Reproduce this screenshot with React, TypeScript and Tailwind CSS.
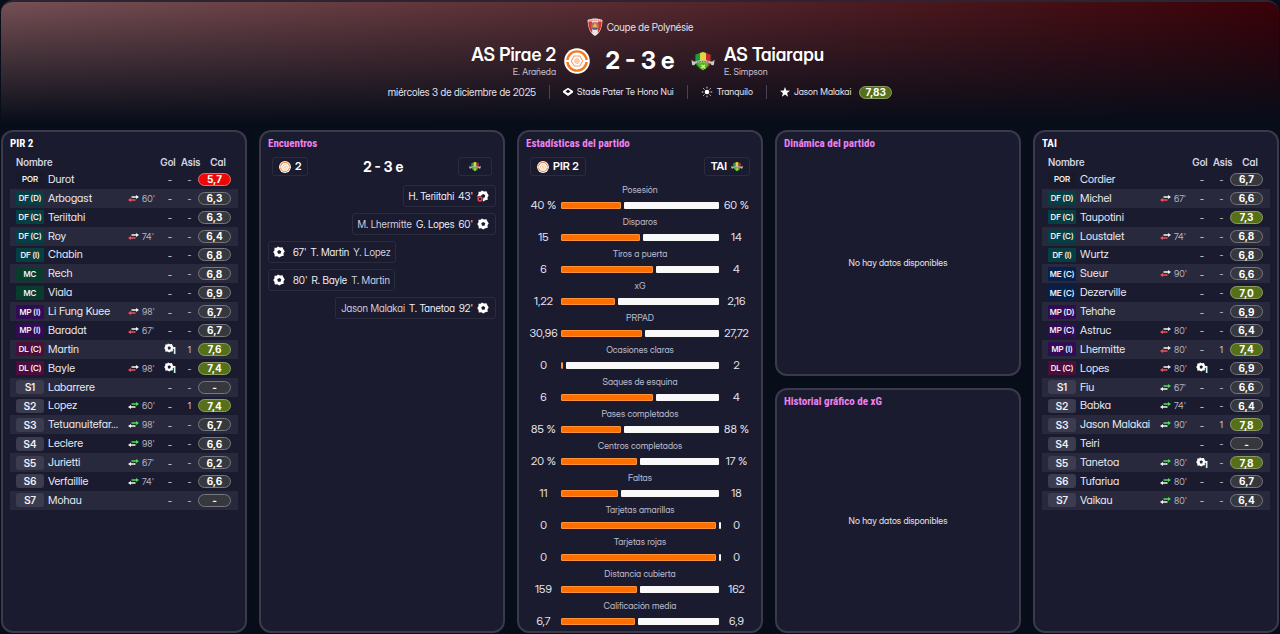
import React from "react";

type Player = {
  pos: string;
  name: string;
  swap?: "out" | "in";
  min?: string;
  goals?: number;
  assists?: number;
  rating: string;
};

const p = (
  pos: string,
  name: string,
  rating: string,
  swap?: "out" | "in",
  min?: string,
  goals?: number,
  assists?: number,
): Player => ({ pos, name, rating, swap, min, goals, assists });

const HOME: Player[] = [
  p("POR", "Durot", "5,7"),
  p("DF (D)", "Arbogast", "6,3", "out", "60'"),
  p("DF (C)", "Teriitahi", "6,3"),
  p("DF (C)", "Roy", "6,4", "out", "74'"),
  p("DF (I)", "Chabin", "6,8"),
  p("MC", "Rech", "6,8"),
  p("MC", "Viala", "6,9"),
  p("MP (I)", "Li Fung Kuee", "6,7", "out", "98'"),
  p("MP (I)", "Baradat", "6,7", "out", "67'"),
  p("DL (C)", "Martin", "7,6", undefined, undefined, 1, 1),
  p("DL (C)", "Bayle", "7,4", "out", "98'", 1),
  p("S1", "Labarrere", "-"),
  p("S2", "Lopez", "7,4", "in", "60'", undefined, 1),
  p("S3", "Tetuanuitefar...", "6,7", "in", "98'"),
  p("S4", "Leclere", "6,6", "in", "98'"),
  p("S5", "Jurietti", "6,2", "in", "67'"),
  p("S6", "Verfaillie", "6,6", "in", "74'"),
  p("S7", "Mohau", "-"),
];

const AWAY: Player[] = [
  p("POR", "Cordier", "6,7"),
  p("DF (D)", "Michel", "6,6", "out", "67'"),
  p("DF (C)", "Taupotini", "7,3"),
  p("DF (C)", "Loustalet", "6,8", "out", "74'"),
  p("DF (I)", "Wurtz", "6,8"),
  p("ME (C)", "Sueur", "6,6", "out", "90'"),
  p("ME (C)", "Dezerville", "7,0"),
  p("MP (D)", "Tehahe", "6,9"),
  p("MP (C)", "Astruc", "6,4", "out", "80'"),
  p("MP (I)", "Lhermitte", "7,4", "out", "80'", undefined, 1),
  p("DL (C)", "Lopes", "6,9", "out", "80'", 1),
  p("S1", "Fiu", "6,6", "in", "67'"),
  p("S2", "Babka", "6,4", "in", "74'"),
  p("S3", "Jason Malakai", "7,8", "in", "90'", undefined, 1),
  p("S4", "Teiri", "-"),
  p("S5", "Tanetoa", "7,8", "in", "80'", 1),
  p("S6", "Tufariua", "6,7", "in", "80'"),
  p("S7", "Vaikau", "6,4", "in", "80'"),
];

const STATS: [string, string, string, number][] = [
  ["Posesión", "40 %", "60 %", 38],
  ["Disparos", "15", "14", 50],
  ["Tiros a puerta", "6", "4", 58],
  ["xG", "1,22", "2,16", 34],
  ["PRPAD", "30,96", "27,72", 51],
  ["Ocasiones claras", "0", "2", 1],
  ["Saques de esquina", "6", "4", 58],
  ["Pases completados", "85 %", "88 %", 38],
  ["Centros completados", "20 %", "17 %", 48],
  ["Faltas", "11", "18", 36],
  ["Tarjetas amarillas", "0", "0", 98],
  ["Tarjetas rojas", "0", "0", 98],
  ["Distancia cubierta", "159", "162", 48],
  ["Calificación media", "6,7", "6,9", 47],
];

const posColor = (pos: string) => {
  if (pos.startsWith("DF")) return "bg-[#053f43]";
  if (pos === "MC") return "bg-[#093c2c]";
  if (pos.startsWith("ME")) return "bg-[#06204e]";
  if (pos.startsWith("MP")) return "bg-[#330b54]";
  if (pos.startsWith("DL")) return "bg-[#4b0d3c]";
  if (pos === "POR") return "bg-[#191a29]";
  return "rounded-[3px] bg-[#3c3c50]";
};

function Rating({ value }: { value: string }) {
  const n = parseFloat(value.replace(",", "."));
  const tone =
    n >= 7
      ? "bg-[#56701a] border-[#8d9d61]"
      : n < 6
        ? "bg-[#ea0808] border-[#f46a6a]"
        : "bg-[#37383d] border-[#77787d]";
  return (
    <span
      className={`inline-flex h-[13px] w-[33px] items-center justify-center rounded-full border font-[Inter,sans-serif] text-[10px] leading-none font-bold text-white ${tone}`}
    >
      {value}
    </span>
  );
}

function Swap({ dir }: { dir: "out" | "in" }) {
  const top = dir === "in" ? "#4be04f" : "#f4f4f6";
  const bottom = dir === "in" ? "#f4f4f6" : "#f0525a";
  return (
    <svg className="mx-auto block" width="11" height="7" viewBox="0 0 11 7" aria-hidden="true">
      <path d="M3.500 1.200H8V0l3 2-3 2V2.700H3.500z" fill={top} />
      <path d="M7.500 4.200H3V3L0 5l3 2V5.700h4.500z" fill={bottom} />
    </svg>
  );
}

function Ball({ className, own = false }: { className: string; own?: boolean }) {
  return (
    <svg className={className} viewBox="0 0 24 24" aria-hidden="true">
      <path
        fill="#fff"
        fillRule="evenodd"
        d="M9.500 1 14 3.200 19 2.500l2 4.500L23.500 11 21 14.500l.5 5-5 1-4 2.500-4-2.500-5 .5-.5-5L.5 12 3 8.500 3 3.500l4.500.2zM12.500 7.800 8.500 10.700l1.500 4.700h5l1.500-4.700z"
      />
      {own && (
        <>
          <circle cx="6" cy="18" r="6.500" fill="#1b1b2f" />
          <circle cx="6" cy="18" r="3.800" fill="none" stroke="#e84b55" strokeWidth="3" />
        </>
      )}
    </svg>
  );
}

function PiraeCrest({ className }: { className: string }) {
  return (
    <svg className={className} viewBox="0 0 26 26" aria-label="AS Pirae 2">
      <circle cx="13" cy="13" r="12.800" fill="#fff" />
      <circle cx="13" cy="13" r="9.600" fill="none" stroke="#f47a1c" strokeWidth="2.400" />
      <path d="M1 12h5v2H1zM20 12h5v2h-5z" fill="#fff" />
      <path
        d="M10.200 8h5.600l2.900 5-2.900 5h-5.600l-2.900-5z"
        fill="none"
        stroke="#f3a070"
        strokeWidth="1.100"
      />
      <circle cx="13" cy="13" r="2.200" fill="none" stroke="#f3a070" />
      <circle cx="13" cy="13" r=".7" fill="#f47a1c" />
    </svg>
  );
}

function TaiarapuCrest({ className }: { className: string }) {
  return (
    <svg className={className} viewBox="0 0 24 22" aria-label="AS Taiarapu">
      <path d="M3.500 4C6 3.500 9 2 12 1c3 1 6 2.500 8.500 3v8c0 4-4 7-8.500 9-4.500-2-8.500-5-8.500-9z" fill="#173a22" />
      <path d="M4.500 4.800 9 3v15.200C6 16 4.500 14 4.500 12z" fill="#25983c" />
      <path d="M9 3l3-1 3 1v15.200L12 20l-3-1.800z" fill="#e3d63c" />
      <path d="m15 3 4.500 1.800V12c0 2-1.500 4.500-4.500 6.200z" fill="#d3232e" />
      <path d="M6 13c3-1 9-1 12 0l-2 4-4 3-4-3z" fill="#54b52f" />
      <path
        d="M.5 9.500c2 2.500 3.500 2.500 5.500 1.500 4-1.500 8-1.500 12 0 2 1 3.500 1 5.500-1.500l-.5 5c-1 1.500-2.500 1-3.500-1-4.500-2-10.500-2-15 0-1 2-2.500 2.500-3.500 1z"
        fill="#c9cbc5"
      />
      <path d="M6 12.300c4-1.300 8-1.300 12 0" stroke="#5f6662" strokeDasharray="1.500 1" fill="none" />
      <path d="m10.500 15 3.500 3M14 15l-3.500 3" stroke="#f4ef72" strokeWidth="1.200" />
    </svg>
  );
}

function CupCrest() {
  return (
    <svg className="h-[18px] w-4" viewBox="0 0 16 18" aria-hidden="true">
      <path d="M.6 2C5 0 11 0 15.400 2c-.2 7-2 13-7.400 16C2.600 15 .8 9 .6 2z" fill="#ece7e4" />
      <path d="M1.200 3.500h4V15C2.700 12.500 1.400 8.500 1.200 3.500zM10.800 3.500h4c-.2 5-1.500 9-4 11.500z" fill="#d33430" />
      <path d="M2 2.200h12" stroke="#c2625f" strokeDasharray="1.500 .7" />
      <circle cx="8" cy="8" r="4" fill="#b96a59" />
      <path d="M8 4.500 11 10H5z" fill="#efb34b" />
      <path d="M4.700 9.500h6.600L10 11.500H6z" fill="#4b5f94" />
    </svg>
  );
}

function Panel({
  title,
  plain = false,
  className = "",
  children,
}: {
  title: string;
  plain?: boolean;
  className?: string;
  children: React.ReactNode;
}) {
  return (
    <section
      className={`flex min-w-0 flex-col rounded-xl border-2 border-[#3a3a4c] bg-[#1b1b2f] px-[7px] pt-1 ${className}`}
    >
      <h2
        className={`font-['Roboto_Condensed','Open_Sans_Condensed','Noto_Sans_Condensed',Roboto,sans-serif] text-[11px] leading-[16px] font-bold ${plain ? "text-white" : "text-[#ee82ee]"}`}
      >
        {title}
      </h2>
      {children}
    </section>
  );
}

function Squad({ title, players }: { title: string; players: Player[] }) {
  return (
    <Panel title={title} plain>
      <table className="mt-0.5 h-[356px] w-full table-fixed border-collapse text-center text-[10px] leading-none text-[#d3d3e2]">
        <colgroup>
          <col className="w-[38px]" />
          <col />
          <col className="w-[17px]" />
          <col className="w-[17px]" />
          <col className="w-[22px]" />
          <col className="w-[17px]" />
          <col className="w-10" />
        </colgroup>
        <thead>
          <tr className="h-4">
            <th colSpan={4} className="p-0 pl-1.5 text-left font-semibold">
              Nombre
            </th>
            <th className="p-0 font-semibold">
              <span className="-ml-1 inline-block">Gol</span>
            </th>
            <th className="p-0 font-semibold">Asis</th>
            <th className="p-0 font-semibold">Cal</th>
          </tr>
        </thead>
        <tbody>
          {players.map((pl) => (
            <tr key={pl.name} className="even:bg-[#28293d]">
              <td className="p-0 pl-1.5 text-left">
                <span
                  className={`flex h-3.5 w-7 items-center justify-center font-semibold whitespace-nowrap text-[#f0f0f6] ${pl.pos.startsWith("S") ? "text-[10px]" : "text-[8px]"} ${posColor(pl.pos)}`}
                >
                  {pl.pos}
                </span>
              </td>
              <td className="p-0 text-left text-[11px] whitespace-nowrap text-[#e9e9f2]">{pl.name}</td>
              <td className="p-0">{pl.swap && <Swap dir={pl.swap} />}</td>
              <td className="p-0 text-left text-[9px] text-[#b4b4c6]">{pl.min}</td>
              <td className="p-0">
                {pl.goals ? (
                  <span className="flex h-3 items-start justify-center font-bold text-white">
                    <Ball className="h-[10px] w-[10px] shrink-0" />
                    <span className="-ml-0.5 self-end text-[9px]">{pl.goals}</span>
                  </span>
                ) : (
                  "-"
                )}
              </td>
              <td className="p-0 text-[9px]">{pl.assists ?? "-"}</td>
              <td className="p-0">
                <span className="flex">
                  <Rating value={pl.rating} />
                </span>
              </td>
            </tr>
          ))}
        </tbody>
      </table>
    </Panel>
  );
}

function TeamTag({ children }: { children: React.ReactNode }) {
  return (
    <span className="flex h-[19px] items-center gap-1 rounded-[3px] border border-[#2a2b3d] px-1.5 text-[11px] leading-none font-semibold text-white">
      {children}
    </span>
  );
}

function Goal({
  away = false,
  own = false,
  min,
  scorer,
  assist,
}: {
  away?: boolean;
  own?: boolean;
  min: string;
  scorer: string;
  assist?: string;
}) {
  return (
    <li
      className={`flex h-[22px] items-center gap-1 rounded-[3px] border border-[#2a2b3d] text-[10px] leading-none whitespace-nowrap text-[#f0f0f6] ${away ? "self-end pr-1.5 pl-[5px]" : "flex-row-reverse self-start px-1"}`}
    >
      {assist && <span className="text-[#d0d0de]">{assist}</span>}
      <span>{scorer}</span>
      <span className={away ? "" : "pl-1"}>{min}</span>
      <Ball className="h-3 w-3 shrink-0" own={own} />
    </li>
  );
}

function Divider() {
  return <span className="mx-[13px] h-3.5 w-px bg-[#454354]" />;
}

export default function App() {
  return (
    <div className="min-h-screen bg-[#070d19] font-['Inter_Display',Inter,'Liberation_Sans',sans-serif] text-[#e4e4ee] [font-feature-settings:'cv11']">
      <header className="mx-px rounded-t-xl border-t-2 border-[#2c2433] bg-[linear-gradient(to_bottom,#070d1900_0%,#070d19_95%),linear-gradient(to_right,#755054,#57292f_50%,#390107)] pt-4 pb-[30px]">
        <div className="flex items-center justify-center gap-1 text-[10px] leading-[18px]">
          <CupCrest />
          Coupe de Polynésie
        </div>
        <div className="mt-2 grid grid-cols-[1fr_auto_1fr] items-center gap-x-2">
          <div className="text-right">
            <h1 className="text-[18px] leading-[22px] font-semibold text-white">AS Pirae 2</h1>
            <p className="text-[9px] leading-3 text-[#c8c2ce]">E. Arañeda</p>
          </div>
          <div className="flex items-center gap-3.5">
            <PiraeCrest className="h-[26px] w-[26px]" />
            <span className="w-[72px] text-center text-[24px] leading-8 font-bold whitespace-nowrap text-white">
              2 - 3 e
            </span>
            <TaiarapuCrest className="h-[22px] w-[26px]" />
          </div>
          <div>
            <h1 className="text-[18px] leading-[22px] font-semibold text-white">AS Taiarapu</h1>
            <p className="text-[9px] leading-3 text-[#c8c2ce]">E. Simpson</p>
          </div>
        </div>
        <div className="mt-1.5 flex items-center justify-center text-[9px] leading-4">
          <span className="text-[10px]">miércoles 3 de diciembre de 2025</span>
          <Divider />
          <span className="flex items-center gap-1">
            <svg className="h-2.5 w-2.5" viewBox="1 0 10 10" aria-hidden="true">
              <path
                d="M6 .8 11 4v1.500L6 9 1 5.500V4zM6 2.500 3.500 4.500 6 6.300l2.500-1.800z"
                fill="#fff"
                fillRule="evenodd"
              />
            </svg>
            Stade Pater Te Hono Nui
          </span>
          <Divider />
          <span className="flex items-center gap-1">
            <svg className="h-3 w-3" viewBox="0 0 12 12" aria-hidden="true">
              <circle cx="6" cy="6" r="2.300" fill="#fff" />
              <path
                d="M6 .8v1.600M6 9.600v1.600M.8 6h1.600M9.600 6h1.600M2.300 2.300l1.200 1.200M8.500 8.500l1.200 1.200M2.300 9.700l1.200-1.200M8.500 3.500l1.200-1.200"
                stroke="#ddd"
              />
            </svg>
            Tranquilo
          </span>
          <Divider />
          <span className="flex items-center gap-1">
            <svg className="h-2.5 w-2.5" viewBox="0 0 10 10" aria-hidden="true">
              <path d="m5 0 1.300 3.500L10 3.700 7.100 6l1 3.700L5 7.600 1.900 9.700l1-3.700L0 3.700l3.700-.2z" fill="#fff" />
            </svg>
            Jason Malakai
            <span className="ml-1 flex">
              <Rating value="7,83" />
            </span>
          </span>
        </div>
      </header>

      <main className="grid grid-cols-5 gap-3 px-px pb-px">
        <Squad title="PIR 2" players={HOME} />

        <Panel title="Encuentros">
          <div className="mx-1 mt-[5px] flex items-center justify-between">
            <TeamTag>
              <PiraeCrest className="h-3 w-3" />2
            </TeamTag>
            <span className="text-[14px] leading-none font-bold text-white">2 - 3 e</span>
            <TeamTag>
              <span className="px-1">
                <TaiarapuCrest className="h-[11px] w-3" />
              </span>
            </TeamTag>
          </div>
          <ul className="mt-[9px] flex flex-col gap-1.5">
            <Goal away own min="43'" scorer="H. Teriitahi" />
            <Goal away min="60'" scorer="G. Lopes" assist="M. Lhermitte" />
            <Goal min="67'" scorer="T. Martin" assist="Y. Lopez" />
            <Goal min="80'" scorer="R. Bayle" assist="T. Martin" />
            <Goal away min="92'" scorer="T. Tanetoa" assist="Jason Malakai" />
          </ul>
        </Panel>

        <Panel title="Estadísticas del partido">
          <div className="mx-1 mt-[5px] flex items-center justify-between">
            <TeamTag>
              <PiraeCrest className="h-3 w-3" />
              PIR 2
            </TeamTag>
            <TeamTag>
              TAI
              <TaiarapuCrest className="h-[11px] w-3" />
            </TeamTag>
          </div>
          <dl className="mt-[7px]">
            {STATS.map(([label, home, away, share]) => (
              <div key={label} className="h-8">
                <dt className="text-center text-[9px] leading-[14px] text-[#bdbdce]">{label}</dt>
                <dd className="flex items-center text-[11px] leading-4 whitespace-nowrap">
                  <span className="w-[35px] shrink-0 text-center">{home}</span>
                  <span className="flex min-w-0 flex-1 gap-[3px]">
                    <span
                      className="h-[7px] shrink-0 rounded-[1px] border border-[#ff9238] bg-[#ff6f00]"
                      style={{ width: `${share}%` }}
                    />
                    <span className="h-[7px] min-w-0.5 flex-1 rounded-[1px] bg-[#f9f9fa]" />
                  </span>
                  <span className="w-[35px] shrink-0 text-center">{away}</span>
                </dd>
              </div>
            ))}
          </dl>
        </Panel>

        <div className="flex min-w-0 flex-col gap-3">
          <Panel title="Dinámica del partido" className="flex-1">
            <p className="flex flex-1 items-center justify-center text-[9px]">No hay datos disponibles</p>
          </Panel>
          <Panel title="Historial gráfico de xG" className="flex-1">
            <p className="flex flex-1 items-center justify-center text-[9px]">No hay datos disponibles</p>
          </Panel>
        </div>

        <Squad title="TAI" players={AWAY} />
      </main>
    </div>
  );
}
